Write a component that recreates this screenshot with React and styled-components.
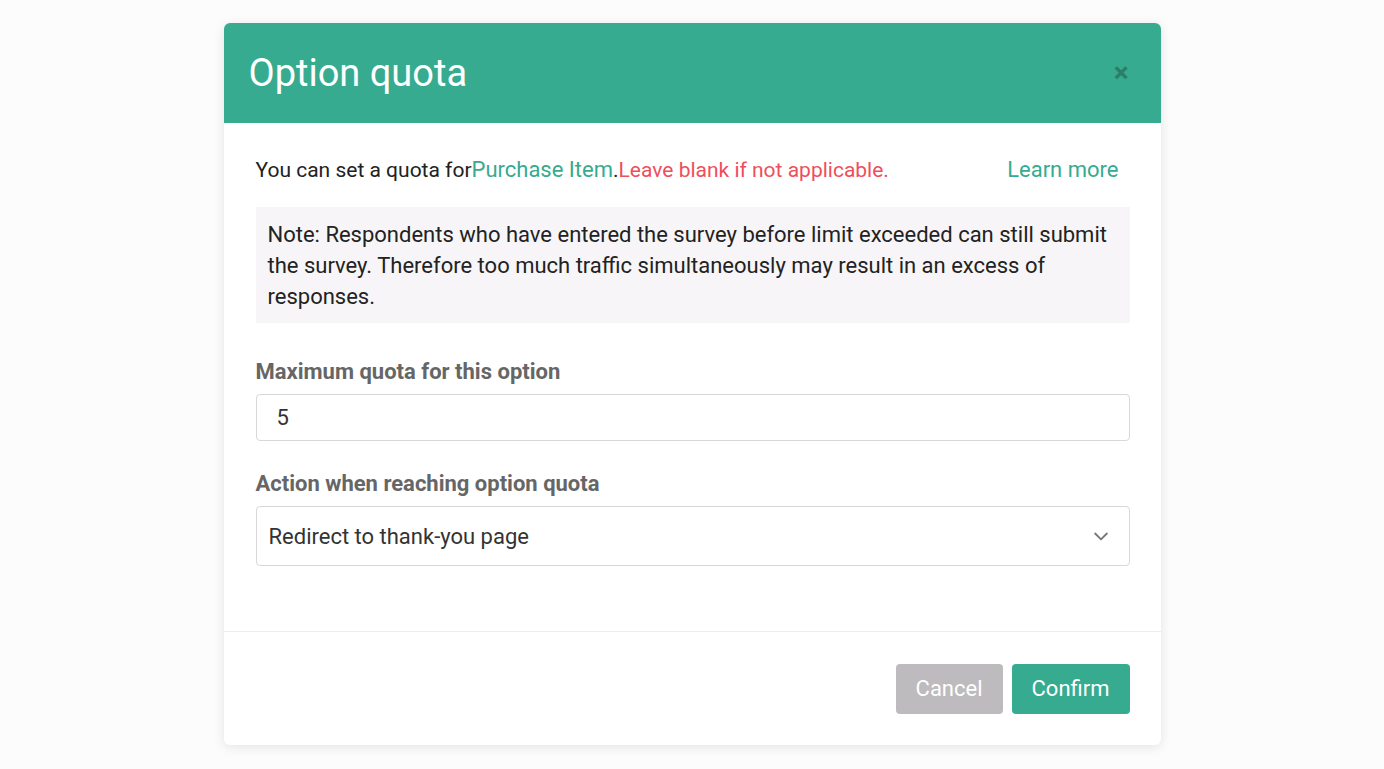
import React from "react";
import styled, { createGlobalStyle } from "styled-components";

const Global = createGlobalStyle`
  body { margin: 0; background: #fdfcfd; font-family: Roboto, "Noto Sans", sans-serif; }
`;
const Page = styled.div`
  display: flex; justify-content: center; padding-top: 23px; height: 769px; box-sizing: border-box;
`;
const Modal = styled.div`
  width: 937px; height: 722px; background: #fff; border-radius: 6px; overflow: hidden;
  box-shadow: 0 2px 12px rgba(0,0,0,0.1); display: flex; flex-direction: column;
`;
const Header = styled.div`
  height: 100px; background: #36ab8f; display: flex; align-items: center; justify-content: space-between;
  padding: 0 32px 0 25px; flex-shrink: 0;
`;
const Title = styled.h2`
  margin: 0; color: #fff; font-weight: 400; font-size: 38px;
`;
const Close = styled.span`
  color: #2a7e6a; font-size: 28px; font-weight: 700; line-height: 1;
`;
const Body = styled.div`
  padding: 34px 31px 0 32px; flex: 1; border-bottom: 1px solid #eeeced;
`;
const Intro = styled.div`
  display: flex; justify-content: space-between; align-items: baseline; font-size: 21px; color: #222;
  padding-right: 11px;
`;
const Green = styled.span` color: #36ab8f; font-size: 22px; `;
const Red = styled.span` color: #ef4e5b; `;
const Note = styled.div`
  margin-top: 25px; background: #f7f5f7; padding: 12px 12px 11px; font-size: 22px; line-height: 31px; color: #222;
`;
const Label = styled.div`
  margin-top: ${p => p.$mt}px; font-size: 22px; font-weight: 700; color: #666; margin-bottom: 10px;
`;
const Field = styled.div`
  height: ${p => p.$h}px; box-sizing: border-box; border: 1px solid #d9d7d9; border-radius: 4px;
  display: flex; align-items: center; justify-content: space-between;
  padding: 0 18px 0 ${p => p.$pl}px; font-size: 22px; color: #333;
`;
const Footer = styled.div`
  height: 113px; display: flex; justify-content: flex-end; align-items: center; gap: 9px; padding: 0 31px 0 0;
  flex-shrink: 0;
`;
const Btn = styled.button`
  height: 50px; padding: 0 ${p => p.$px}px; border: none; border-radius: 4px; font-size: 22px;
  font-family: inherit; color: #fff; background: ${p => p.$bg};
`;

export default function App() {
  return (
    <>
      <Global />
      <Page>
        <Modal>
          <Header>
            <Title>Option quota</Title>
            <Close>×</Close>
          </Header>
          <Body>
            <Intro>
              <span>You can set a quota for<Green>Purchase Item</Green>.<Red>Leave blank if not applicable.</Red></span>
              <Green>Learn more</Green>
            </Intro>
            <Note>
              Note: Respondents who have entered the survey before limit exceeded can still submit the survey. Therefore too much traffic simultaneously may result in an excess of responses.
            </Note>
            <Label $mt={36}>Maximum quota for this option</Label>
            <Field $h={47} $pl={20}>5</Field>
            <Label $mt={30}>Action when reaching option quota</Label>
            <Field $h={60} $pl={12}>
              Redirect to thank-you page
              <svg width="20" height="20" viewBox="0 0 24 24" fill="none" stroke="#777" strokeWidth="2.2" strokeLinecap="round" strokeLinejoin="round"><path d="M5 9l7 7 7-7" /></svg>
            </Field>
          </Body>
          <Footer>
            <Btn $bg="#bdbbbd" $px={20}>Cancel</Btn>
            <Btn $bg="#36ab8f" $px={20}>Confirm</Btn>
          </Footer>
        </Modal>
      </Page>
    </>
  );
}
